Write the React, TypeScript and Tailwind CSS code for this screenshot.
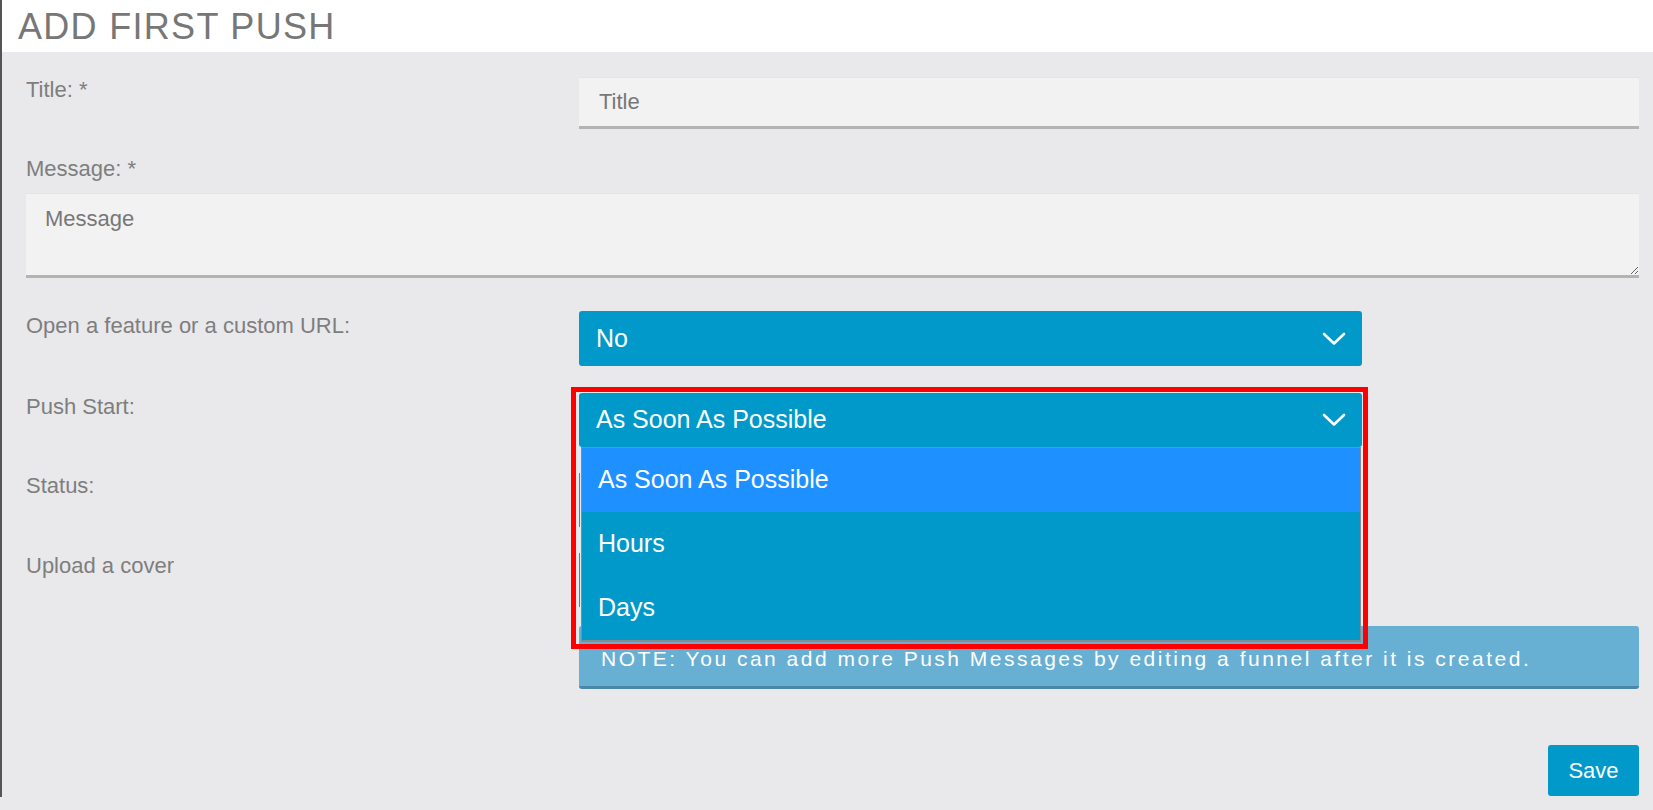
import React from 'react';

const Chevron = () => (
  <svg width="24" height="14" viewBox="0 0 24 14" fill="none">
    <polyline
      points="2,2 12,11.5 22,2"
      stroke="white"
      strokeWidth="2.6"
      strokeLinecap="round"
      strokeLinejoin="round"
    />
  </svg>
);

const Label: React.FC<{ children: React.ReactNode; className?: string }> = ({ children, className = '' }) => (
  <div className={`text-[22px] leading-[26px] text-[#7e7e7e] ${className}`}>{children}</div>
);

const SelectBox: React.FC<{ value: string; className?: string }> = ({ value, className = '' }) => (
  <div
    className={`flex items-center justify-between rounded-[3px] bg-[#0099ca] pl-[17px] pr-[16px] text-[25px] text-white ${className}`}
  >
    <span>{value}</span>
    <Chevron />
  </div>
);

const options = ['As Soon As Possible', 'Hours', 'Days'];

export default function App() {
  return (
    <div className="min-h-screen bg-[#e9e9eb] font-['Liberation_Sans',Arial,sans-serif]">
      <div className="border-l-2 border-[#555555] pb-[1px]">
        <div className="h-[52px] bg-white pl-[16px] pt-[1px] text-[36px] leading-[52px] tracking-[1.3px] text-[#777777]">
          ADD FIRST PUSH
        </div>

        <div className="pl-6 pr-[14px]">
          {/* title */}
          <div className="mt-[25px] grid grid-cols-[553px_1fr]">
            <Label>Title: *</Label>
            <input
              placeholder="Title"
              className="h-[52px] border-t border-b-[3px] border-t-[#e4e4e4] border-b-[#b3b3b3] bg-[#f2f2f2] pl-[20px] text-[22px] text-[#555] outline-none placeholder:text-[#777777]"
            />
          </div>

          {/* message */}
          <Label className="mt-[27px]">Message: *</Label>
          <textarea
            placeholder="Message"
            className="mt-[11px] block h-[85px] w-full resize-y border-t border-b-[3px] border-t-[#e4e4e4] border-b-[#b3b3b3] bg-[#f2f2f2] pl-[19px] pt-[12px] text-[22px] leading-[26px] text-[#555] outline-none placeholder:text-[#777777]"
          />

          {/* open feature */}
          <div className="mt-[33px] grid grid-cols-[553px_1fr]">
            <Label className="pt-[2px]">Open a feature or a custom URL:</Label>
            <div className="pr-[277px]">
              <SelectBox value="No" className="h-[55px]" />
            </div>
          </div>

          {/* push start */}
          <div className="mt-[27px] grid grid-cols-[553px_1fr]">
            <Label className="pt-[1px]">Push Start:</Label>
            <div className="pr-[277px]">
              <div className="relative z-10">
                <SelectBox value="As Soon As Possible" className="h-[54px]" />
                <div className="absolute left-[2px] right-[1px] top-full border border-b-2 border-[#8a8a8a] bg-[#0099ca]">
                  {options.map((o, i) => (
                    <div
                      key={o}
                      className={`flex h-[64px] items-center pl-[16px] text-[25px] text-white ${
                        i === 0 ? 'bg-[#1e90ff]' : 'bg-[#0099ca]'
                      }`}
                    >
                      {o}
                    </div>
                  ))}
                </div>
                <div className="pointer-events-none absolute left-[-8px] right-[-6px] top-[-6px] h-[262px] border-[5px] border-[#ff0000]" />
              </div>
            </div>
          </div>

          {/* status */}
          <div className="mt-[26px] grid grid-cols-[553px_1fr]">
            <Label>Status:</Label>
            <div className="h-[54px] border-l border-[#777777]" />
          </div>

          {/* upload */}
          <div className="mt-[26px] grid grid-cols-[553px_1fr]">
            <Label>Upload a cover</Label>
            <div className="h-[54px] border-l border-[#777777]" />
          </div>

          {/* note */}
          <div className="mt-[19px] grid grid-cols-[553px_1fr]">
            <div />
            <div className="flex h-[63px] items-center rounded-[3px] border-b-[3px] border-[#4b87a6] bg-[#68afd4] pl-[22px] pt-[5px] text-[21px] tracking-[2.5px] text-white">
              NOTE: You can add more Push Messages by editing a funnel after it is created.
            </div>
          </div>

          {/* save */}
          <div className="mt-[56px] flex justify-end">
            <button className="h-[51px] w-[91px] rounded-[3px] bg-[#0099ca] text-[22px] text-white">
              Save
            </button>
          </div>
        </div>
      </div>
    </div>
  );
}
